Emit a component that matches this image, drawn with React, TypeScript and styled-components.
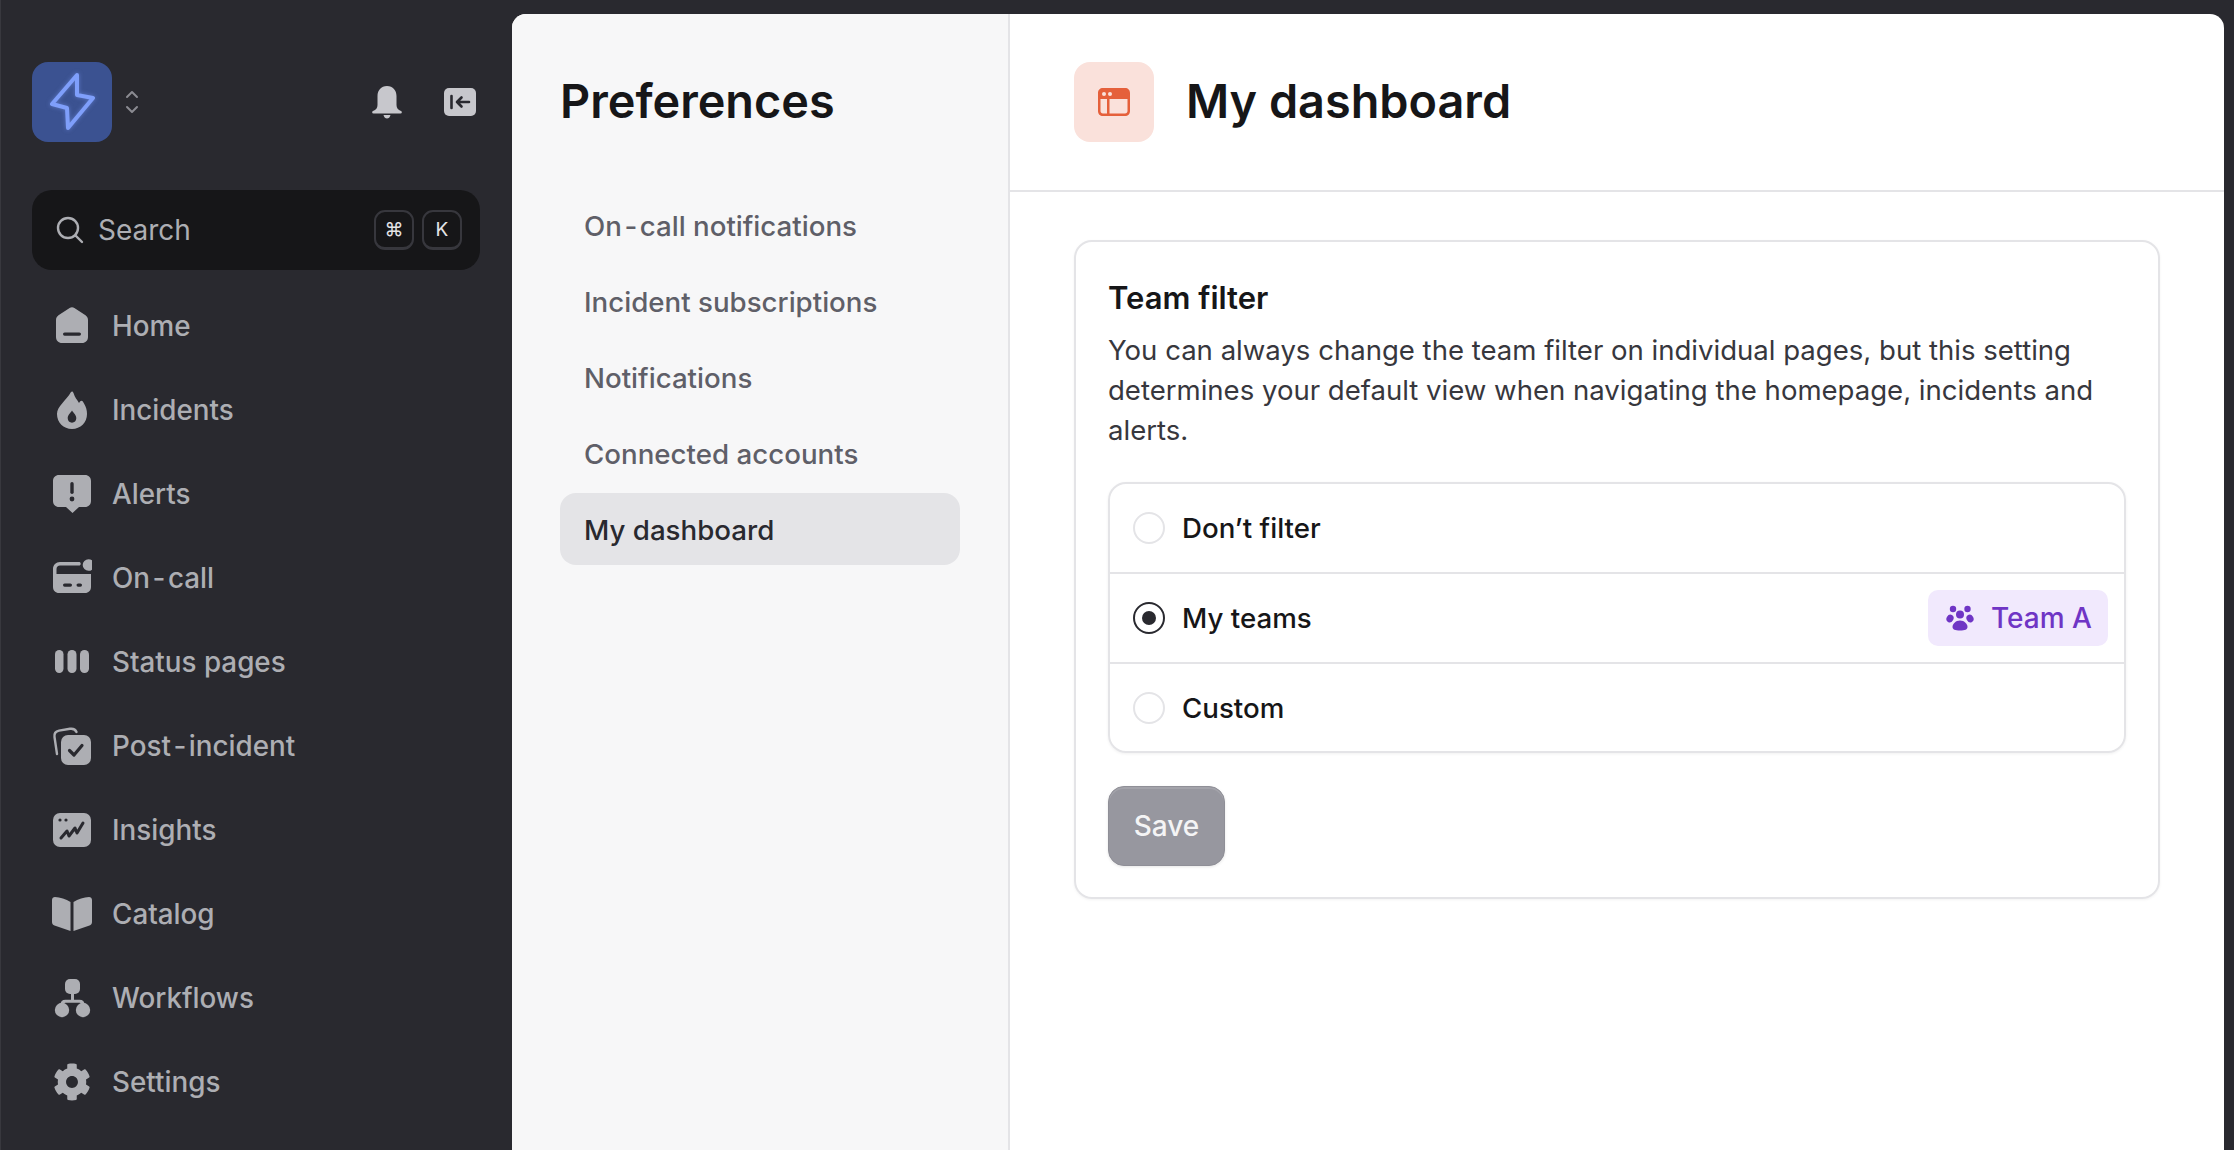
import React from 'react';
import styled, { createGlobalStyle } from 'styled-components';
import { FaCog } from 'react-icons/fa';

const GlobalStyle = createGlobalStyle`
  html, body {
    margin: 0;
    height: 100%;
    overflow: hidden;
    background: #29292f;
  }
  body {
    font-family: Inter, "Liberation Sans", sans-serif;
    -webkit-font-smoothing: antialiased;
  }
  * {
    box-sizing: border-box;
  }
`;

const Shell = styled.div`
  display: flex;
  height: 1150px;
  width: 2234px;
  background: #29292f;
`;

const Sidebar = styled.aside`
  width: 512px;
  flex-shrink: 0;
  padding: 62px 32px 0 31px;
  border-left: 1px solid #38383e;
  display: flex;
  flex-direction: column;
`;

const TopRow = styled.div`
  display: flex;
  align-items: center;
  height: 80px;
`;

const Logo = styled.div`
  width: 80px;
  height: 80px;
  border-radius: 16px;
  background: #3b5291;
`;

const Bolt = styled.svg`
  display: block;
  filter: blur(0.6px) drop-shadow(0 0 2px rgba(127, 159, 251, 0.5));
`;

const Switcher = styled.svg`
  margin-left: 12px;
  width: 16px;
  height: 24px;
`;

const TopActions = styled.div`
  margin-left: auto;
  display: flex;
  align-items: center;
  gap: 41px;
  padding-right: 4px;
`;

const SearchBar = styled.div`
  margin-top: 48px;
  height: 80px;
  border-radius: 20px;
  background: #161618;
  display: flex;
  align-items: center;
  padding: 0 18px 0 24px;
  color: #adaeb3;
  font-size: 28px;
`;

const SearchLabel = styled.span`
  margin-left: 14px;
  flex: 1;
`;

const Key = styled.kbd`
  width: 40px;
  height: 40px;
  margin-left: 8px;
  border-radius: 11px;
  border: 2px solid #37373d;
  border-bottom-width: 3px;
  display: flex;
  align-items: center;
  justify-content: center;
  color: #e4e4e7;
  font-family: Inter, "DejaVu Sans", sans-serif;
  font-size: 19px;
`;

const NavList = styled.nav`
  margin-top: 14px;
  display: flex;
  flex-direction: column;
`;

const NavItem = styled.a`
  height: 84px;
  display: flex;
  align-items: center;
  gap: 20px;
  padding-left: 20px;
  color: #adaeb3;
  font-size: 27.8px;
  font-weight: 450;
`;

const Dash = styled.span`
  margin: 0 2.5px;
`;

const Gear = styled(FaCog)`
  margin: 1px;
`;

const Panel = styled.main`
  flex: 1;
  margin: 14px 10px 0 0;
  background: #ffffff;
  border-radius: 14px 14px 0 0;
  display: flex;
  overflow: hidden;
`;

const PrefColumn = styled.section`
  width: 498px;
  flex-shrink: 0;
  background: #f7f7f8;
  border-right: 2px solid #e4e4e7;
  padding: 48px 48px 0;
`;

const PrefTitle = styled.h1`
  margin: 0;
  height: 80px;
  padding-bottom: 2px;
  display: flex;
  align-items: center;
  font-size: 46.8px;
  font-weight: 600;
  color: #161618;
`;

const PrefNav = styled.div`
  margin-top: 47px;
  display: flex;
  flex-direction: column;
  gap: 4px;
`;

const PrefLink = styled.a<{ $active?: boolean }>`
  height: 72px;
  padding: 1px 0 0 24px;
  display: flex;
  align-items: center;
  border-radius: 16px;
  font-size: 27.7px;
  font-weight: 450;
  color: ${p => (p.$active ? '#29292f' : '#5f5f68')};
  background: ${p => (p.$active ? '#e4e4e7' : 'transparent')};
`;

const Content = styled.section`
  flex: 1;
  display: flex;
  flex-direction: column;
`;

const Header = styled.header`
  height: 178px;
  flex-shrink: 0;
  padding: 48px 64px 0;
  border-bottom: 2px solid #e4e4e7;
  display: flex;
  align-items: flex-start;
  gap: 32px;
`;

const HeaderIcon = styled.div`
  width: 80px;
  height: 80px;
  border-radius: 16px;
  background: #fae1db;
  display: flex;
  align-items: center;
  justify-content: center;
`;

const HeaderTitle = styled.h2`
  margin: 0;
  height: 80px;
  padding-bottom: 2px;
  display: flex;
  align-items: center;
  font-size: 46.8px;
  font-weight: 600;
  color: #161618;
`;

const Body = styled.div`
  padding: 48px 64px 0;
`;

const Card = styled.div`
  border: 2px solid #e4e4e7;
  border-radius: 18px;
  padding: 32px 32px 31px;
  box-shadow: 0 1px 3px rgba(0, 0, 0, 0.05);
`;

const CardTitle = styled.h3`
  margin: 0;
  font-size: 31px;
  line-height: 47px;
  font-weight: 600;
  color: #161618;
`;

const CardText = styled.p`
  margin: 9px 0 0;
  font-size: 27.55px;
  line-height: 40px;
  color: #37373d;
`;

const RadioGroup = styled.div`
  margin-top: 32px;
  border: 2px solid #e4e4e7;
  border-radius: 18px;
  box-shadow: 0 1px 3px rgba(0, 0, 0, 0.06);
`;

const RadioRow = styled.div`
  height: 90px;
  display: flex;
  align-items: center;
  padding: 0 16px 0 23px;
  border-bottom: 2px solid #e4e4e7;

  &:last-child {
    border-bottom: 0;
    height: 87px;
  }
`;

const RadioDot = styled.span<{ $checked?: boolean }>`
  width: 32px;
  height: 32px;
  border-radius: 50%;
  border: 2px solid ${p => (p.$checked ? '#29292f' : '#e4e4e7')};
  display: flex;
  align-items: center;
  justify-content: center;

  &::after {
    content: '';
    width: 14px;
    height: 14px;
    border-radius: 50%;
    background: ${p => (p.$checked ? '#29292f' : 'transparent')};
  }
`;

const RadioLabel = styled.span`
  margin-left: 17px;
  flex: 1;
  font-size: 27.7px;
  font-weight: 450;
  color: #161618;
`;

const TeamBadge = styled.span`
  width: 180px;
  height: 56px;
  border-radius: 10px;
  background: #f1e9fd;
  color: #6f35c5;
  display: flex;
  align-items: center;
  gap: 17px;
  padding-left: 18px;
  font-size: 28px;
  font-weight: 450;
`;

const SaveButton = styled.button`
  margin-top: 33px;
  display: block;
  width: 117px;
  height: 80px;
  border: 1px solid #8f8f97;
  border-radius: 16px;
  background: #97979f;
  box-shadow: inset 0 2px 0 rgba(255, 255, 255, 0.12), 0 1px 3px rgba(0, 0, 0, 0.1);
  color: #f4f4f5;
  font-family: inherit;
  font-size: 28px;
  font-weight: 450;
`;

const ICON = '#adaeb3';
const INK = '#29292f';

const Icon = ({ children }: { children: React.ReactNode }) => (
  <svg width="40" height="40" viewBox="0 0 40 40" fill={ICON}>
    {children}
  </svg>
);

// the hyphen sits wider in the reference than in the installed Inter
const withDash = (label: string) => {
  const [head, tail] = label.split('-');
  if (tail === undefined) return label;
  return (
    <span>
      {head}
      <Dash>-</Dash>
      {tail}
    </span>
  );
};

const navItems: { label: string; icon: React.ReactNode }[] = [
  {
    label: 'Home',
    icon: (
      <Icon>
        <path d="M17.6 2 L6.5 9.2 C5 10.2 4 12 4 14 V31 C4 34.5 6.5 37 10 37 H30 C33.5 37 36 34.5 36 31 V14 C36 12 35 10.2 33.5 9.2 L22.4 2 C20.9 1 19.1 1 17.6 2 Z" />
        <rect x="11" y="26.5" width="18" height="3.2" rx="1.6" fill={INK} />
      </Icon>
    ),
  },
  {
    label: 'Incidents',
    icon: (
      <Icon>
        <path d="M19 2 C20 1 21 1.500 21.500 3 C22.800 7.500 25 9.500 27 13 C28 11.500 28.600 10.800 29.500 10.800 C30.500 10.800 31.300 12 32 13.500 C34 17 35 20 35 24 C35 32.500 28.500 39 20 39 C11.500 39 5 32.500 5 24 C5 16 14 11 19 2 Z" />
        <path d="M20 20.500 C21.500 23 24.300 25 24.300 28.300 C24.300 30.800 22.400 32.700 20 32.700 C17.600 32.700 15.700 30.800 15.700 28.300 C15.700 25 18.500 23 20 20.500 Z" fill={INK} />
      </Icon>
    ),
  },
  {
    label: 'Alerts',
    icon: (
      <Icon>
        <path d="M7 1 H33 C36.500 1 39 3.500 39 7 V27 C39 30.500 36.500 33 33 33 H27 L20.500 39 L14 33 H7 C3.500 33 1 30.500 1 27 V7 C1 3.500 3.500 1 7 1 Z" />
        <rect x="18.300" y="8" width="3.400" height="12" rx="1.700" fill={INK} />
        <circle cx="20" cy="25" r="2.400" fill={INK} />
      </Icon>
    ),
  },
  {
    label: 'On-call',
    icon: (
      <Icon>
        <path d="M27 4 H8 C4 4 1 7 1 11 V29 C1 32.500 3.500 35 7 35 H33 C36.500 35 39 32.500 39 29 V16 H4.500 V11 C4.500 9 6 7.500 8 7.500 H27 C28 7.500 28.700 6.700 28.700 5.700 C28.700 4.700 28 4 27 4 Z" />
        <circle cx="36.500" cy="7" r="5.800" />
        <rect x="11" y="25.500" width="9" height="3.200" rx="1.600" fill={INK} />
        <rect x="24.500" y="25.500" width="5.500" height="3.200" rx="1.600" fill={INK} />
      </Icon>
    ),
  },
  {
    label: 'Status pages',
    icon: (
      <Icon>
        <rect x="3" y="8" width="8.500" height="23" rx="4.200" />
        <rect x="15.500" y="8" width="9" height="23" rx="4.400" />
        <rect x="28" y="8" width="9" height="23" rx="4.400" />
      </Icon>
    ),
  },
  {
    label: 'Post-incident',
    icon: (
      <Icon>
        <rect x="9" y="9" width="30" height="30" rx="7" />
        <path d="M5 28 L2.500 11 C2 7.500 4 5.200 7 4.600 L18 2.800 C21 2.400 23.500 3.500 24.500 6" fill="none" stroke={ICON} strokeWidth="2.400" strokeLinecap="round" />
        <path d="M17.500 24.500 L22 29 L30 19.500" fill="none" stroke={INK} strokeWidth="3.200" strokeLinecap="round" strokeLinejoin="round" />
      </Icon>
    ),
  },
  {
    label: 'Insights',
    icon: (
      <Icon>
        <rect x="1" y="3" width="38" height="34" rx="7" />
        <circle cx="8" cy="10" r="1.600" fill={INK} />
        <circle cx="14" cy="10" r="1.600" fill={INK} />
        <path d="M9 28 L15 21 L17 26 L23 18 L25 23 L31 13" fill="none" stroke={INK} strokeWidth="3" strokeLinecap="round" strokeLinejoin="round" />
      </Icon>
    ),
  },
  {
    label: 'Catalog',
    icon: (
      <Icon>
        <path d="M18.500 8 C14 5 8 3.500 3 3 C1.300 3 0 4 0 6 V28 C0 30 1 31 2.500 31.500 L18.500 37 Z" />
        <path d="M21.500 8 C26 5 32 3.500 37 3 C38.700 3 40 4 40 6 V28 C40 30 39 31 37.500 31.500 L21.500 37 Z" />
      </Icon>
    ),
  },
  {
    label: 'Workflows',
    icon: (
      <Icon>
        <rect x="13" y="1" width="15" height="15" rx="5" />
        <path d="M10 30 V26.500 C10 24.500 11.500 23.300 13.500 23.300 H27.500 C29.500 23.300 31 24.500 31 26.500 V30 M20.500 15 V23" fill="none" stroke={ICON} strokeWidth="3" />
        <circle cx="10" cy="32" r="7.200" />
        <circle cx="31" cy="32" r="7.200" />
      </Icon>
    ),
  },
  {
    label: 'Settings',
    icon: <Gear size={38} color={ICON} />,
  },
];

const prefLinks = ['On-call notifications', 'Incident subscriptions', 'Notifications', 'Connected accounts', 'My dashboard'];

const App = () => {
  return (
    <Shell>
      <GlobalStyle />
      <Sidebar>
        <TopRow>
          <Logo>
            <Bolt width="80" height="80" viewBox="0 0 80 80" fill="none">
              <path d="M45 13 L20 42 L35 46 L36 66 L61 36 L45 33 Z" stroke="#7f9ffb" strokeWidth="4" strokeLinejoin="round" />
            </Bolt>
          </Logo>
          <Switcher viewBox="0 0 16 24" fill="none" stroke="#8b8b92" strokeWidth="2" strokeLinecap="round" strokeLinejoin="round">
            <path d="M3 7 L8 2 L13 7" />
            <path d="M3 17 L8 22 L13 17" />
          </Switcher>
          <TopActions>
            <svg width="32" height="34" viewBox="0 0 32 34" fill="#c7c7cc">
              <path d="M16 1 C10 1 6.500 5.500 6.500 11 V20 C6.500 23 5 25 2 26 C0.800 26.500 0.800 28.500 2.500 28.500 H29.500 C31.200 28.500 31.200 26.500 30 26 C27 25 25.500 23 25.500 20 V11 C25.500 5.500 22 1 16 1 Z" />
              <path d="M12.500 30 H19.500 C19 32.500 17.500 33.500 16 33.500 C14.500 33.500 13 32.500 12.500 30 Z" />
            </svg>
            <svg width="32" height="28" viewBox="0 0 32 28">
              <rect width="32" height="28" rx="5" fill="#c7c7cc" />
              <path d="M7.500 8 V20" stroke={INK} strokeWidth="2.600" strokeLinecap="round" />
              <path d="M25 14 H13 M17.500 9.500 L13 14 L17.500 18.500" stroke={INK} strokeWidth="2.600" strokeLinecap="round" strokeLinejoin="round" fill="none" />
            </svg>
          </TopActions>
        </TopRow>
        <SearchBar>
          <svg width="28" height="28" viewBox="0 0 28 28" fill="none" stroke="#adaeb3" strokeWidth="2.400" strokeLinecap="round">
            <circle cx="12" cy="12" r="10" />
            <path d="M19.500 19.500 L26 26" />
          </svg>
          <SearchLabel>Search</SearchLabel>
          <Key>⌘</Key>
          <Key>K</Key>
        </SearchBar>
        <NavList>
          {navItems.map(item => (
            <NavItem key={item.label}>
              {item.icon}
              {withDash(item.label)}
            </NavItem>
          ))}
        </NavList>
      </Sidebar>
      <Panel>
        <PrefColumn>
          <PrefTitle>Preferences</PrefTitle>
          <PrefNav>
            {prefLinks.map(link => (
              <PrefLink key={link} $active={link === 'My dashboard'}>
                {withDash(link)}
              </PrefLink>
            ))}
          </PrefNav>
        </PrefColumn>
        <Content>
          <Header>
            <HeaderIcon>
              <svg width="32" height="28" viewBox="0 0 32 28" fill="#e5603b">
                <path fillRule="evenodd" d="M5 0 H27 C30 0 32 2 32 5 V23 C32 26 30 28 27 28 H5 C2 28 0 26 0 23 V5 C0 2 2 0 5 0 Z M2.500 11 V23 C2.500 24.500 3.500 25.500 5 25.500 H9 V11 Z M11.500 11 V25.500 H27 C28.500 25.500 29.500 24.500 29.500 23 V11 Z" />
                <circle cx="6" cy="6" r="2" fill="#fae1db" />
                <circle cx="12" cy="6" r="2" fill="#fae1db" />
              </svg>
            </HeaderIcon>
            <HeaderTitle>My dashboard</HeaderTitle>
          </Header>
          <Body>
            <Card>
              <CardTitle>Team filter</CardTitle>
              <CardText>
                You can always change the team filter on individual pages, but this setting determines your default view when navigating the homepage, incidents and alerts.
              </CardText>
              <RadioGroup>
                <RadioRow>
                  <RadioDot />
                  <RadioLabel>Don’t filter</RadioLabel>
                </RadioRow>
                <RadioRow>
                  <RadioDot $checked />
                  <RadioLabel>My teams</RadioLabel>
                  <TeamBadge>
                    <svg width="28" height="26" viewBox="0 0 28 26" fill="#6f35c5">
                      <circle cx="7" cy="4" r="3.200" />
                      <circle cx="21.500" cy="4" r="3.200" />
                      <circle cx="14" cy="9.500" r="4" />
                      <ellipse cx="4" cy="13.500" rx="3.400" ry="4" transform="rotate(30 4 13.500)" />
                      <ellipse cx="24" cy="13.500" rx="3.400" ry="4" transform="rotate(-30 24 13.500)" />
                      <path d="M14 15.500 C18.500 15.500 21.500 19 21.500 22 C21.500 24.500 19 25.500 14 25.500 C9 25.500 6.500 24.500 6.500 22 C6.500 19 9.500 15.500 14 15.500 Z" />
                    </svg>
                    Team A
                  </TeamBadge>
                </RadioRow>
                <RadioRow>
                  <RadioDot />
                  <RadioLabel>Custom</RadioLabel>
                </RadioRow>
              </RadioGroup>
              <SaveButton>Save</SaveButton>
            </Card>
          </Body>
        </Content>
      </Panel>
    </Shell>
  );
};

export default App;
